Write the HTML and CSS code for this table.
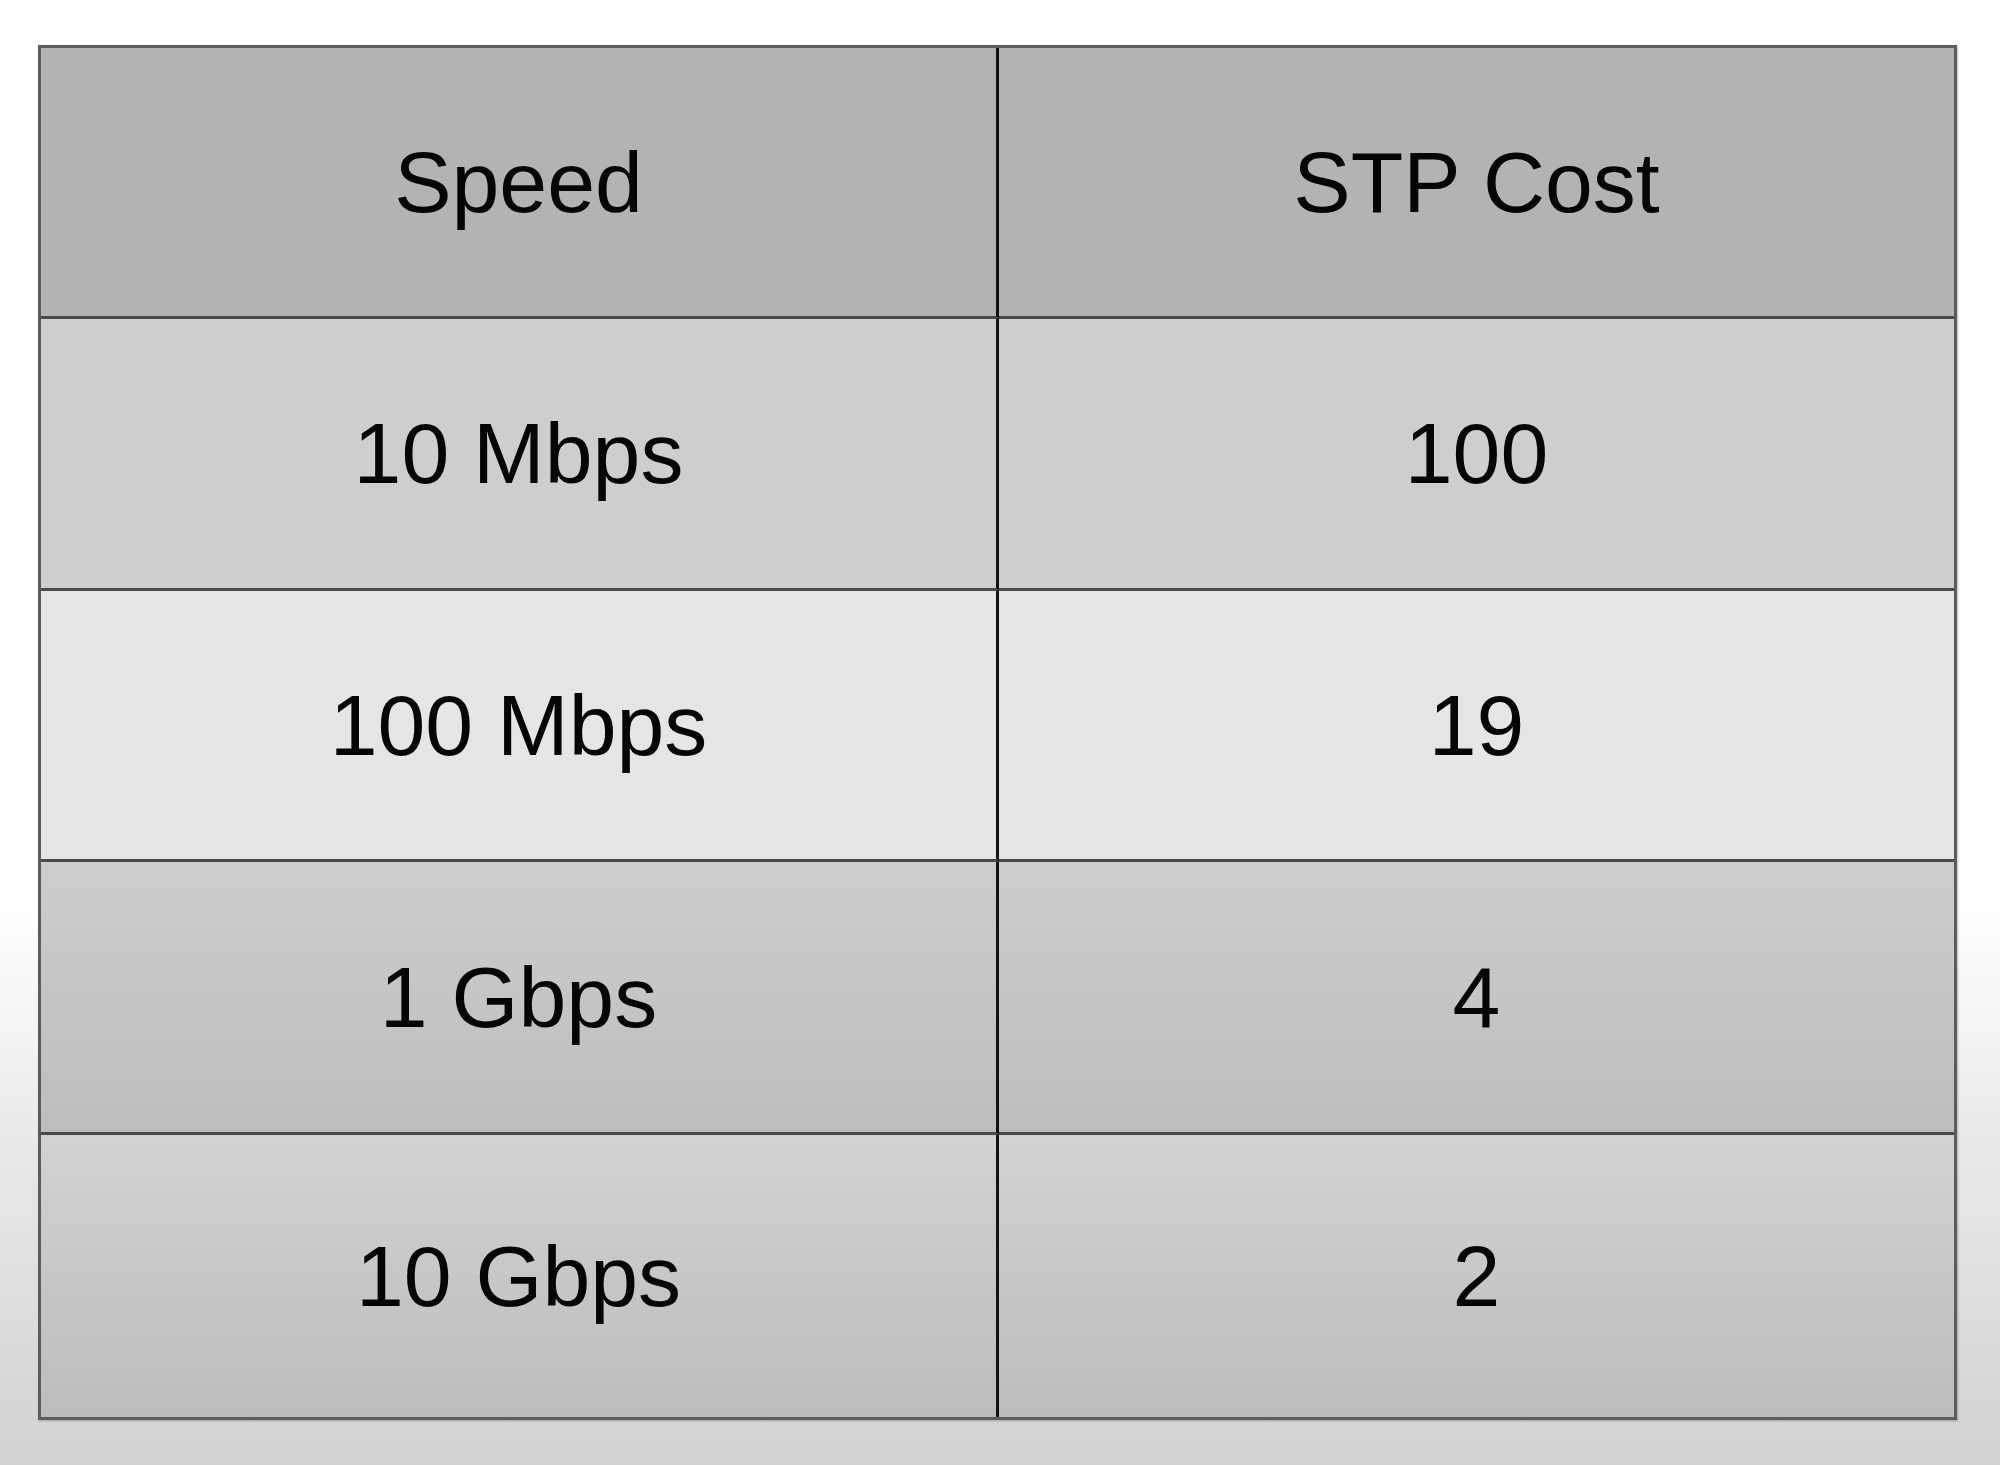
FILE: index.html
```html
<!DOCTYPE html>
<html>
<head>
<meta charset="utf-8">
<link rel="stylesheet" href="styles.css">
</head>
<body>
<div class="sheet">
  <div class="cell head left">Speed</div>
  <div class="cell head">STP Cost</div>
  <div class="cell r1 left">10 Mbps</div>
  <div class="cell r1">100</div>
  <div class="cell r2 left">100 Mbps</div>
  <div class="cell r2">19</div>
  <div class="cell r3 left">1 Gbps</div>
  <div class="cell r3">4</div>
  <div class="cell r4 left">10 Gbps</div>
  <div class="cell r4 last">2</div>
</div>
</body>
</html>
```
FILE: styles.css
```css
html, body {
  margin: 0;
  padding: 0;
}
body {
  width: 2000px;
  height: 1465px;
  overflow: hidden;
  background: linear-gradient(to bottom, #ffffff 0%, #ffffff 62%, #e9e9e9 78%, #d2d2d2 100%);
  font-family: "Liberation Sans", Arial, sans-serif;
  padding-top: 45px;
  padding-left: 38px;
  box-sizing: border-box;
}
.sheet {
  box-sizing: border-box;
  width: 1919px;
  display: grid;
  grid-template-columns: 958px 955px;
  grid-template-rows: 271px 272px 271px 273px 282px;
  border: 3px solid #5c5c5c;
  box-shadow: 1px 1px 2px rgba(0,0,0,0.25);
}
.cell {
  display: flex;
  align-items: center;
  justify-content: center;
  font-size: 86px;
  color: #050505;
  border-bottom: 3px solid #4a4a4a;
}
.cell.left {
  border-right: 3px solid #121212;
}
.r4 {
  border-bottom: none;
}
.head {
  background: #b3b3b3;
}
.r1 {
  background: #cecece;
}
.r2 {
  background: #e5e5e5;
}
.r3 {
  background: linear-gradient(to bottom, #cdcdcd 0%, #bdbdbd 100%);
}
.r4 {
  background: linear-gradient(to bottom, #d2d2d2 0%, #bcbcbc 100%);
}
```
